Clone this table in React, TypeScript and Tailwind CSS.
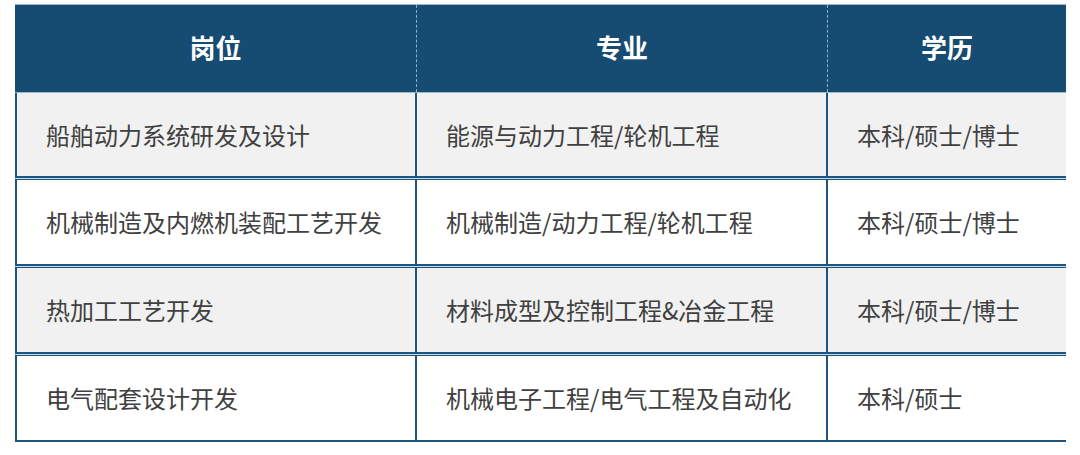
const rows = [
  { job: "船舶动力系统研发及设计", major: "能源与动力工程/轮机工程", degree: "本科/硕士/博士" },
  { job: "机械制造及内燃机装配工艺开发", major: "机械制造/动力工程/轮机工程", degree: "本科/硕士/博士" },
  { job: "热加工工艺开发", major: "材料成型及控制工程&冶金工程", degree: "本科/硕士/博士" },
  { job: "电气配套设计开发", major: "机械电子工程/电气工程及自动化", degree: "本科/硕士" },
];

const font = { fontFamily: '"Microsoft YaHei", "Noto Sans CJK SC", sans-serif' };

export default function App() {
  return (
    <div className="w-[1080px] h-[455px] bg-white pl-[15px] pt-[4px]" style={font}>
      <div className="w-[1051px]">
        {/* Header */}
        <div className="grid grid-cols-[402px_411px_238px] h-[88px] bg-[#164c72] border-t border-[#9fb8cc]">
          <div className="flex items-center justify-center pb-[4px] border-r border-dashed border-[#8fb0c8] text-white text-[26px] font-bold">岗位</div>
          <div className="flex items-center justify-center pb-[4px] border-r border-dashed border-[#8fb0c8] text-white text-[26px] font-bold">专业</div>
          <div className="flex items-center justify-center pb-[4px] text-white text-[26px] font-bold">学历</div>
        </div>
        {rows.map((r, i) => (
          <div key={i}>
            {i > 0 && <div className="h-[4px] border-t-2 border-b border-[#1c557e] bg-[#c7d7e3]" />}
            <div
              className={`grid grid-cols-[402px_411px_238px] h-[84px] text-[24px] text-[#404040] ${
                i % 2 === 0 ? "bg-[#f1f1f1]" : "bg-white"
              } ${i === 0 ? "border-t border-[#9fb8cc]" : ""}`}
            >
              <div className="flex items-center pl-[29px] border-l-2 border-r-2 border-[#1c557e]">{r.job}</div>
              <div className="flex items-center pl-[29px] border-r-2 border-[#1c557e]">{r.major}</div>
              <div className="flex items-center pl-[29px]">{r.degree}</div>
            </div>
          </div>
        ))}
        <div className="h-[2px] bg-[#1c557e]" />
      </div>
    </div>
  );
}
